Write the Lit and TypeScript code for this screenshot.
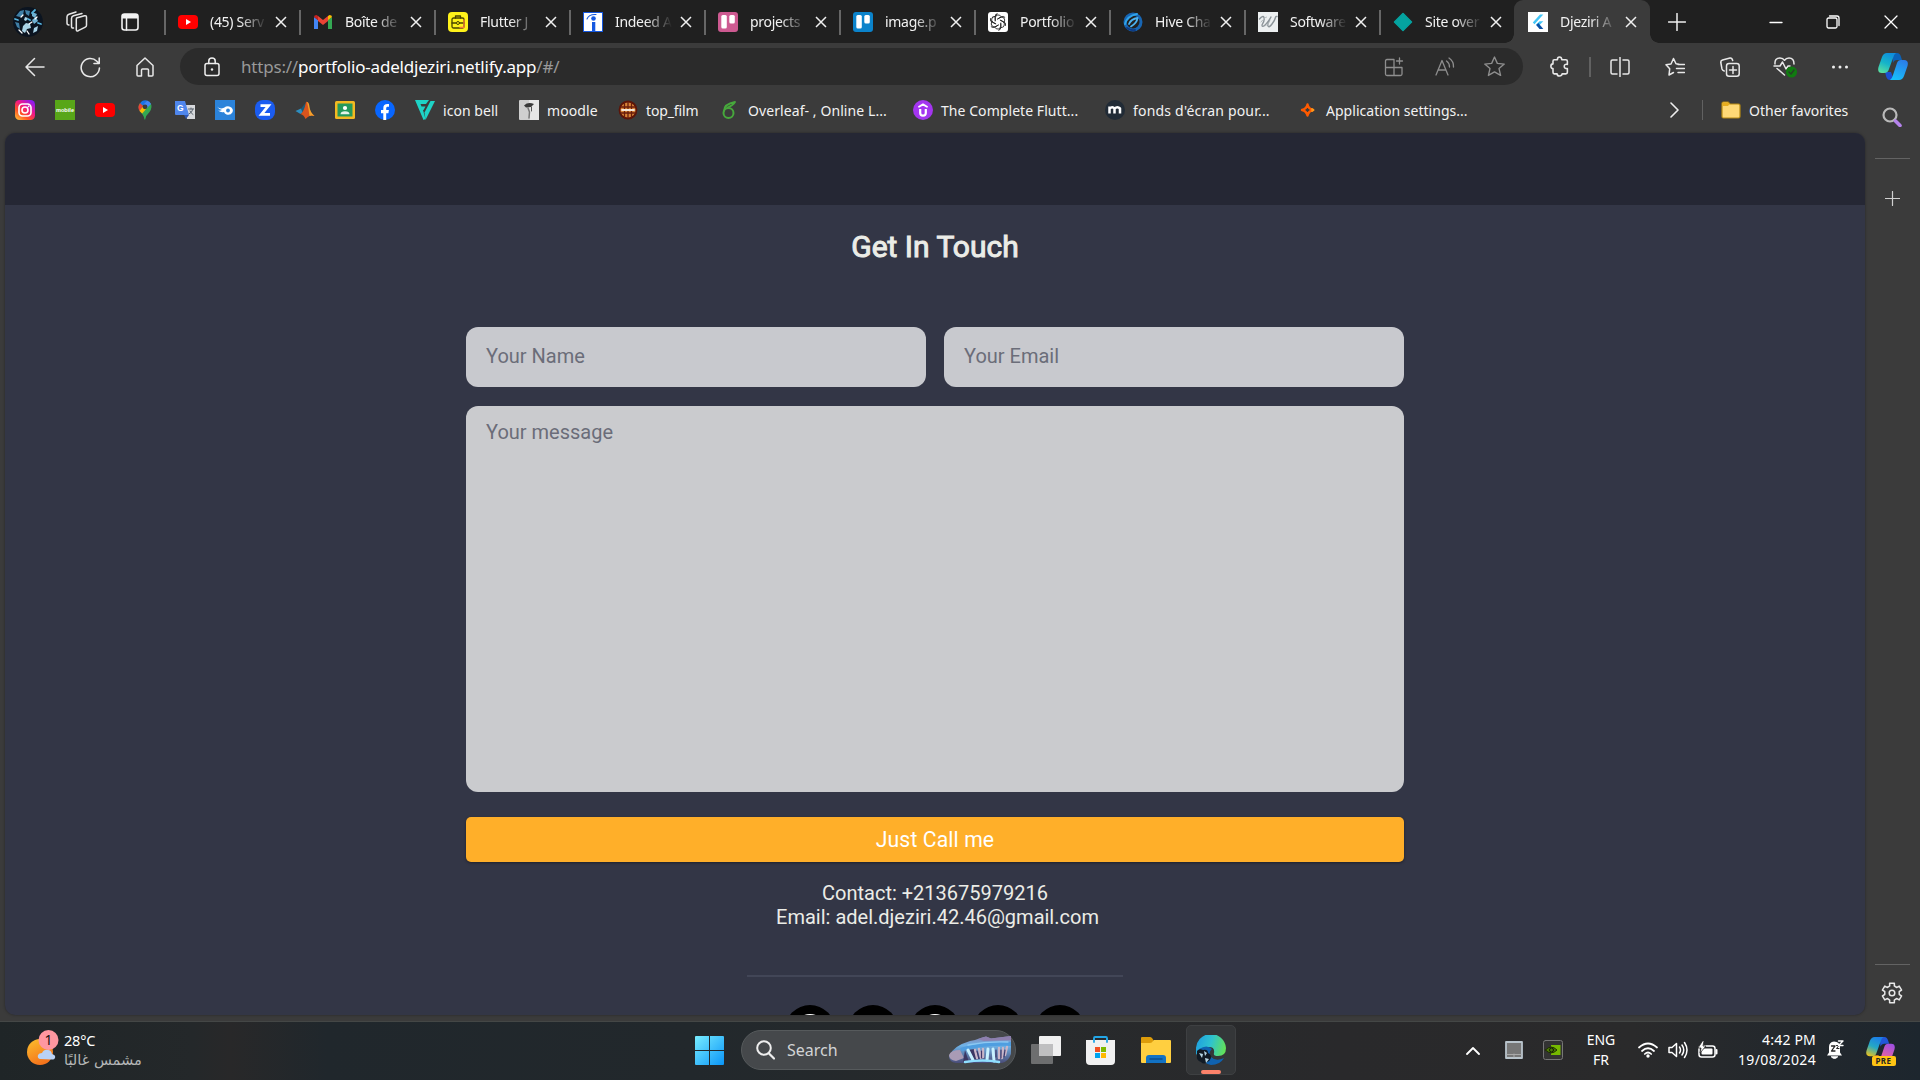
import { LitElement, html, css, svg, nothing } from "lit";
import { customElement } from "lit/decorators.js";

const icon = (w: number, h: number, vb: string, body: unknown) =>
  html`<svg width=${w} height=${h} viewBox=${vb} fill="none" stroke-linecap="round" stroke-linejoin="round">${body}</svg>`;

const line = (d: string, size = 20, color = "#e8e8e8", sw = 1.5) =>
  icon(size, size, "0 0 20 20", svg`<path d=${d} stroke=${color} stroke-width=${sw} />`);

const youtube = icon(20, 20, "0 0 20 20", svg`<rect y="3" width="20" height="14" rx="4" fill="#f00"/><path d="M8 7v6l5-3z" fill="#fff"/>`);
const gmail = icon(20, 20, "0 0 20 20", svg`<path d="M1 5v12h4V8z" fill="#4285f4"/><path d="M15 8v9h4V5z" fill="#34a853"/><path d="M1 5l4 3.2V4L3.500 3Q1 3 1 5z" fill="#c5221f"/><path d="M15 4v4.200L19 5Q19 3 16.500 3z" fill="#fbbc04"/><path d="M5 4l5 4 5-4v5l-5 4-5-4z" fill="#ea4335"/>`);
const briefcase = icon(20, 20, "0 0 20 20", svg`<rect width="20" height="20" rx="4" fill="#fff21a"/><rect x="4" y="6" width="12" height="10" rx="1.500" stroke="#4a4300" stroke-width="1.300"/><path d="M7.500 6V4h5v2M4 11h4m4 0h4" stroke="#4a4300" stroke-width="1.300"/><path d="M16 8v7.500h-4" stroke="#f5793b" stroke-width="1.300"/><circle cx="10" cy="11" r="1.500" stroke="#4a4300"/>`);
const indeed = icon(20, 20, "0 0 20 20", svg`<path d="M0 0h20v20H0z" fill="#fff" stroke="#1558e0" stroke-width="2"/><circle cx="10.500" cy="6.500" r="2.300" fill="#1558e0"/><path d="M9 10h3.300v9H9z" fill="#1558e0"/><path d="M4 7Q6 2 13 2.500" stroke="#1558e0" stroke-width="1.100"/>`);
const trello = (c: string) => icon(20, 20, "0 0 20 20", svg`<rect width="20" height="20" rx="3" fill=${c}/><rect x="3.300" y="3" width="5.500" height="13.500" rx="1.500" fill="#fff"/><rect x="11.300" y="3" width="5.500" height="8.500" rx="1.500" fill="#fff"/>`);
const gpt = icon(20, 20, "0 0 20 20", svg`<rect width="20" height="20" rx="3" fill="#fff"/>${[0, 60, 120, 180, 240, 300].map((a) => svg`<path d="M7.200 9V5.800a3.200 3.200 0 0 1 6-1.200M10 6.800l3.200-1.900a3.100 3.100 0 0 1 3.600.3" transform=${`rotate(${a} 10 10)`} stroke="#222" stroke-width=".9"/>`)}`);
const hive = icon(20, 20, "0 0 20 20", svg`<circle cx="10" cy="10" r="8" stroke="#1866b4" stroke-width="3"/><path d="M2 12Q4 4 14 2" stroke="#2fa3ea" stroke-width="2"/><path d="M6 12Q8 7 14.500 6 14 11 8 14.500" stroke="#4db4f3" stroke-width="1.800"/><path d="M4 16q4 3 8 2" stroke="#0d3b84" stroke-width="2"/>`);
const wLogo = icon(20, 20, "0 0 20 20", svg`<path d="M0 0h20v20H0z" fill="#edf0f1"/><path d="M1.500 7Q5 3 6 5.500T4 13Q4 15.500 6.500 13.500T13 5Q9 12 10 14t4-2 3.500-6.500Q17.500 4 19 4.500" stroke="#8c9499" stroke-width="1.400"/><path d="M3 10Q7 5 8.500 5M7 14Q10 13 12 9" stroke="#b3babd"/>`);
const diamond = icon(20, 20, "0 0 20 20", svg`<path d="M10 1.500L18.500 10 10 18.500 1.500 10z" fill="#05a3a0" stroke="#05a3a0" stroke-width="1.500"/>`);
const flutter = icon(20, 20, "0 0 20 20", svg`<path d="M0 0h20v20H0z" fill="#fff"/><path d="M4.800 10.500L12 2.500h3.300L6.500 12.200z" fill="#43c6f7"/><path d="M11.500 9.200h3.800L11.800 12.800 10 14.500 8 12.800z" fill="#43c6f7"/><path d="M8.200 13l2.200-1.900 4.900 5.900h-3.800z" fill="#0a4fa5"/>`);

const TABS: [string, unknown][] = [
  ["(45) Serv", youtube],
  ["Boîte de", gmail],
  ["Flutter J", briefcase],
  ["Indeed A", indeed],
  ["projects", trello("#cd5a91")],
  ["image.p", trello("#0b83cb")],
  ["Portfolio", gpt],
  ["Hive Cha", hive],
  ["Software", wLogo],
  ["Site over", diamond],
  ["Djeziri A", flutter],
];

const instagram = icon(20, 20, "0 0 20 20", svg`<defs><linearGradient id="ig" x1="0" y1="1" x2=".8" y2="0"><stop stop-color="#ffca3a"/><stop offset=".35" stop-color="#ff5324"/><stop offset=".65" stop-color="#f0168a"/><stop offset="1" stop-color="#8a1cf5"/></linearGradient></defs><rect width="20" height="20" rx="4.500" fill="url(#ig)"/><rect x="4" y="4" width="12" height="12" rx="3.500" stroke="#fff" stroke-width="1.600"/><circle cx="10" cy="10" r="3" stroke="#fff" stroke-width="1.600"/><circle cx="13.600" cy="6.400" r=".9" fill="#fff"/>`);
const mobile = icon(20, 20, "0 0 20 20", svg`<path d="M0 0h20v20H0z" fill="#58a618"/><text x="10" y="12" text-anchor="middle" textLength="18" lengthAdjust="spacingAndGlyphs" font-family="Liberation Sans" font-weight="700" font-size="5.500" fill="#fff">mobile</text>`);
const maps = icon(20, 20, "0 0 20 20", svg`<path d="M10 20Q9 15 5.500 12Q2 7 5 3L10 7z" fill="#34a853"/><path d="M10 20q1-5 4.500-8 3.500-5 1-9L7 12z" fill="#34a853"/><path d="M5 3.500A6.500 6.500 0 0 1 12 .4L8 6z" fill="#1a73e8"/><path d="M5 3.200l3.500 3L4.500 11Q2 7 5 3.200z" fill="#ea4335"/><path d="M12 .4q3 .8 4 3.500L12 8 8.500 4.500z" fill="#4285f4"/><path d="M4.500 11L8 6.500l3.500 2L7.200 13.600z" fill="#fbbc04"/><circle cx="10" cy="6.800" r="2.400" fill="#3b3b3b"/>`);
const translate = icon(20, 20, "0 0 20 20", svg`<path d="M9 5h11v14h-8z" fill="#d7d9dc"/><path d="M0 1h10l4 14H1Q0 15 0 14z" fill="#4f86ec"/><path d="M9 15h5l-3 4z" fill="#2f56b0"/><text x="2" y="11" font-family="Liberation Sans" font-weight="700" font-size="8.500" fill="#fff">G</text><path d="M13.500 9h5m-2.500-1v1m2 0q-1 4-4 5m1-3q1 2.500 3 3.500" stroke="#5c6670"/>`);
const medal = icon(20, 20, "0 0 20 20", svg`<path d="M0 0h20v20H0z" fill="#2b83da"/><path d="M2 6.500q3 3 7 1.200 3-2 6-1 4 2 2.500 5.500-2 3.500-6 2.300-2-.8-2.500-2.500-3 1-6-1.500 2 .5 4-.5-3-.5-5-3.500z" fill="#fff"/><circle cx="13" cy="10.500" r="1.900" fill="#2b83da"/>`);
const zBadge = icon(20, 20, "0 0 20 20", svg`<rect width="20" height="20" rx="8" fill="#1b5cf0"/><path d="M5.500 5.700h8L6.500 14.300h8.500" stroke="#fff" stroke-width="2.800" stroke-linecap="butt" stroke-linejoin="miter"/>`);
const matlab = icon(20, 20, "0 0 20 20", svg`<path d="M.5 11L6 8.500l3 3L5.500 14z" fill="#2d8ec0"/><path d="M6 8.500l5-6-2 9-1.500 1z" fill="#1c5a78"/><path d="M11 2q2-1 3 5t5.500 9q-3-1-5 0t-4 3Q9 15 5.500 14 9 12 11 2z" fill="#d9541e"/><path d="M12 2q2 0 2.500 5t5 9q-3-1-5 0-1-8-2.500-14z" fill="#f5a02a"/>`);
const classroom = icon(20, 20, "0 0 20 20", svg`<rect y="1" width="20" height="18" rx="1.500" fill="#f3b921"/><path d="M2.500 3.500h15v13h-15z" fill="#24995b"/><circle cx="10" cy="8" r="2.100" fill="#fff"/><path d="M5.500 14.200q0-3 4.500-3t4.500 3z" fill="#e3f4e8"/>`);
const facebook = icon(20, 20, "0 0 20 20", svg`<circle cx="10" cy="10" r="10" fill="#0866ff"/><path d="M8.300 20v-6.800H6V10h2.300V8.200c0-3 1.500-4.300 4.200-4.300l1.500.2v2.700h-1.300c-1.100 0-1.500.6-1.500 1.600V10h2.700l-.5 3.200h-2.200V20z" fill="#fff"/>`);
const iconBell = icon(20, 20, "0 0 20 20", svg`<path d="M0 0h14l-3 4H5.500l1 2.500h4L8.500 10H8l2.500 9-2 1z" fill="#1ed3c6"/><path d="M15.500 1H20L10.500 20 9.500 12.500z" fill="#1ed3c6"/>`);
const moodle = icon(20, 20, "0 0 20 20", svg`<rect width="20" height="20" rx="1" fill="#cfcfcf"/><path d="M10 0h10v20H11z" fill="#e6e6e6"/><path d="M5 5.500q4-4 10-1.500l-3 3-5 .5z" fill="#3a3a3a"/><path d="M9 8l1.500 4-.5 6" stroke="#777" stroke-width="1.500"/><path d="M12.500 7v4" stroke="#555"/>`);
const film = icon(20, 20, "0 0 20 20", svg`<circle cx="10" cy="10" r="8.500" fill="#d88337" stroke="#5b1408" stroke-width="1.800"/><path d="M3 7h14M3 13h14M6.500 3v14M10 2v16M13.500 3v14" stroke="#6a1c0c" stroke-width="1.300"/><path d="M4 10h12" stroke="#f5e6d8" stroke-width="1.800"/>`);
const overleaf = icon(20, 20, "-2 0 20 20", svg`<circle cx="6.500" cy="13" r="5" stroke="#47a83c" stroke-width="2"/><path d="M2 11Q2 4 13 2 11 5.500 5.500 7.500" stroke="#47a83c" stroke-width="1.800"/>`);
const udemy = icon(20, 20, "0 0 20 20", svg`<circle cx="10" cy="10" r="10" fill="#a435f0"/><path d="M7.200 9v4q0 2.600 2.800 2.600t2.800-2.600V9" stroke="#fff" stroke-width="2.200" stroke-linecap="butt"/><path d="M6 6.700l4-2.300 4 2.300" stroke="#fff" stroke-width="1.800"/>`);
const mBadge = icon(20, 20, "0 0 20 20", svg`<circle cx="10" cy="10" r="10" fill="#212b36"/><path d="M4.500 13.500v-7m0 2q3-2.500 5 0v5m0-5q3-2.500 5.500 0v5" stroke="#fff" stroke-width="2.500" stroke-linecap="butt"/>`);
const spark = icon(20, 20, "-2 0 20 20", svg`<path d="M7.500 4.500Q8.500 9 13 10 8.500 11 7.500 15.500 6.500 11 2 10 6.500 9 7.500 4.500z" stroke="#ff5a00" stroke-width="2.400" /><path d="M7.500 8Q8 9.500 9.500 10 8 10.500 7.500 12 7 10.500 5.500 10 7 9.500 7.500 8z" fill="#3b3b3b"/><path d="M12 9l1.500 1-1.500 1" stroke="#ff9a1a" stroke-width="2"/>`);

/* icon, label, cell width, letter spacing */
const MARKS: [unknown, string, number, number][] = [
  [instagram, "", 40, 0], [mobile, "", 40, 0], [youtube, "", 40, 0], [maps, "", 40, 0], [translate, "", 40, 0],
  [medal, "", 40, 0], [zBadge, "", 40, 0], [matlab, "", 40, 0], [classroom, "", 40, 0], [facebook, "", 40, 0],
  [iconBell, "icon bell", 104, 0.05], [moodle, "moodle", 99, 0.1], [film, "top_film", 102, -0.12],
  [overleaf, "Overleaf- , Online L...", 193, 0.08], [udemy, "The Complete Flutt...", 192, 0.06],
  [mBadge, "fonds d'écran pour...", 193, 0.2], [spark, "Application settings...", 200, 0.03],
];

const closeX = html`<svg class="x" width="12" height="12" viewBox="0 0 12 12"><path d="M1 1l10 10M11 1L1 11" stroke="#f0f0f0" stroke-width="1.500"/></svg>`;

const gearPath = (() => {
  const p: string[] = [];
  for (let i = 0; i < 6; i++) {
    const a = (i * Math.PI) / 3 - Math.PI / 2;
    const pt = (r: number, o: number) => `${(11 + r * Math.cos(a + o)).toFixed(2)} ${(11 + r * Math.sin(a + o)).toFixed(2)}`;
    p.push(`${i ? "L" : "M"}${pt(7.4, -0.32)}L${pt(10, -0.24)}L${pt(10, 0.24)}L${pt(7.4, 0.32)}L${pt(7.2, 0.52)}`);
  }
  return p.join("") + "z";
})();

const copilot = (n: string, size: number, pre = false) => icon(size, Math.round(size * 0.9), "0 0 30 27", svg`
  <defs>
    <linearGradient id=${n + "a"} x1=".6" y1="0" x2=".2" y2="1"><stop stop-color=${pre ? "#1c7fe8" : "#0f8fdc"}/><stop offset=".5" stop-color=${pre ? "#25a9c4" : "#16b4c9"}/><stop offset="1" stop-color=${pre ? "#e8c21f" : "#5be0a0"}/></linearGradient>
    <linearGradient id=${n + "b"} x1=".7" y1="0" x2=".3" y2="1"><stop stop-color=${pre ? "#a04fe0" : "#2b7de8"}/><stop offset="1" stop-color=${pre ? "#ff6a8a" : "#17c0fb"}/></linearGradient>
  </defs>
  <path d="M14 0h5q3 0 4 4l1 3h-5q-3 0-4 3z" fill=${pre ? "#2257d8" : "#0b62b8"}/>
  <path d="M16 27h-4q-3 0-4-4l-1-4h6z" fill=${pre ? "#f08c2a" : "#1b4fd0"}/>
  <path d="M9 0h9q-2 1-3 5l-4 11q-1 4-5 4H4Q-1 20 .5 14L4 4Q5.500 0 9 0z" fill=${`url(#${n}a)`}/>
  <path d="M21 27h-9q2-1 3-5l4-12q1-3 4-3h3q5 0 3.500 6L26 23q-1.500 4-5 4z" fill=${`url(#${n}b)`}/>`);

@customElement("browser-chrome")
class BrowserChrome extends LitElement {
  static styles = css`
    :host { display: block; color: #f2f2f2; font-family: "Noto Sans", "Open Sans", sans-serif; font-size: 14px; }
    svg { display: block; flex: none; }
    .strip { display: flex; height: 43px; background: #202020; }
    .lead { display: grid; grid-template-columns: 56px 42px 64px; width: 164px; align-items: center; justify-items: center; }
    .tab { box-sizing: border-box; width: 135px; height: 43px; padding: 1px 0 0 12px; display: flex; align-items: center; position: relative; }
    .tab .sep { width: 2px; height: 25px; background: #666; margin-left: -12px; margin-right: 12px; }
    .tab .name { width: 60px; margin-left: 12px; white-space: nowrap; letter-spacing: -0.3px; padding-bottom: 2px;
      -webkit-mask-image: linear-gradient(90deg, #000 30px, transparent 57px); mask-image: linear-gradient(90deg, #000 30px, transparent 57px); }
    .tab .x { margin-left: 5px; }
    .tab.on { width: 136px; background: #3b3b3b; border-radius: 9px 9px 0 0; padding-left: 14px; }
    .tab.on::before, .tab.on::after { content: ""; position: absolute; bottom: 0; width: 9px; height: 9px; }
    .tab.on::before { left: -9px; background: radial-gradient(circle at 0 0, transparent 8.5px, #3b3b3b 9px); }
    .tab.on::after { right: -9px; background: radial-gradient(circle at 100% 0, transparent 8.5px, #3b3b3b 9px); }
    .win { display: grid; grid-template-columns: 54px 101px 56px 59px; align-items: center; justify-items: center; }
    .win .min { margin-left: 43px; }
    .bar { display: flex; height: 48px; align-items: center; background: #3b3b3b; }
    .nav { display: grid; grid-template-columns: 60px 50px 60px; padding-left: 5px; width: 175px; justify-items: center; align-items: center; }
    .url { display: flex; align-items: center; width: 1343px; height: 37px; border-radius: 19px; background: #2b2b2b; box-sizing: border-box; padding-left: 23px; margin-bottom: 1px; }
    .addr { margin-left: 20px; width: 1127px; font-size: 17px; color: #999; letter-spacing: -0.2px; white-space: nowrap; padding-bottom: 1px; }
    .addr b { font-weight: 400; color: #fff; }
    .ua { display: grid; grid-template-columns: 51px 51px 49px; justify-items: center; align-items: center; }
    .acts { display: grid; grid-template-columns: 60px 2px 57px 54px 56px 54px 56px 50px; justify-items: center; align-items: center; padding: 0 0 1px 6px; }
    .vr { width: 2px; height: 20px; background: #616161; }
    .marks { display: flex; box-sizing: border-box; align-items: center; height: 42px; background: #3b3b3b; padding: 0 0 4px 15px; }
    .mk { display: flex; align-items: center; gap: 8px; white-space: nowrap; flex: none; }
    .tail { display: flex; align-items: center; margin-left: 167px; padding-left: 4px; white-space: nowrap; flex: none; }
    .tail .vr { margin: 0 18px 0 23px; width: 1px; }
    .tail span { margin-left: 8px; letter-spacing: 0; }
  `;

  render() {
    return html`
      <div class="strip">
        <div class="lead">
          ${icon(30, 30, "0 0 30 30", svg`<defs><clipPath id="av"><circle cx="15" cy="15" r="15"/></clipPath></defs><g clip-path="url(#av)"><path d="M0 0h30v30H0z" fill="#0b1420"/><path d="M3 9l4-5 4-1-1 5-3 2zM12 3l5 1-1 5-3-2zM2 15l4 1 1 6-3-2z" fill="#3f7fa6"/><path d="M19 5l5 2-2 4-3-2zM19 13l4-3 2 4-4 3z" fill="#6fb1d2"/><path d="M10 19l3-3 4 1 1 4-4 1-2 4-3-2zM21 21l4-2-1 5-4 2zM12 10l3 1-2 3-2-1z" fill="#a9d3e6"/><path d="M8 10l2-2M16 17l3-2M14 24l2 3M22 12l2-2M6 23l3 3" stroke="#fff" stroke-width="1.300"/><path d="M19 6l3-3M25 16l3 1M2 12l3 1M15 12l2 1" stroke="#56b3dd" stroke-width="1.800"/></g>`)}
          ${icon(22, 22, "0 0 22 22", svg`<path d="M10.500 7l8-2.300q2-.4 2 1.500v8q0 1.300-1.200 1.900l-7 3.600q-2 .8-2-1.200V9q0-1.500.2-2zM7.500 17q-2 .3-2-1.500V7.500q0-2 2-2.700L16 2.500M3 14Q1 14 1 12V5.800Q1 4 3 3.300L10 1" stroke="#e6e6e6" stroke-width="1.500"/>`)}
          ${icon(18, 18, "0 0 18 18", svg`<rect x="1" y="1" width="16" height="16" rx="2.500" stroke="#f2f2f2" stroke-width="1.600"/><path d="M1 3q0-2 2-2h12q2 0 2 2v2.500H1z" fill="#f2f2f2"/><path d="M5.500 5v12" stroke="#f2f2f2" stroke-width="1.500"/>`)}
        </div>
        ${TABS.map(([name, ic], i) => html`<div class="tab ${i === 10 ? "on" : ""}">${i < 10 ? html`<i class="sep"></i>` : nothing}${ic}<span class="name">${name}</span>${closeX}</div>`)}
        <div class="win">
          ${icon(18, 18, "0 0 18 18", svg`<path d="M9 .5v17M.5 9h17" stroke="#eee" stroke-width="1.500"/>`)}
          <span class="min">${icon(14, 14, "0 0 14 14", svg`<path d="M1 7.500h12" stroke="#fff" stroke-width="1.300"/>`)}</span>
          ${icon(14, 14, "0 0 14 14", svg`<rect x="1" y="3" width="10" height="10" rx="1.500" stroke="#fff" stroke-width="1.300"/><path d="M3.500 1H11q2 0 2 2v7.500" stroke="#fff" stroke-width="1.300"/>`)}
          ${icon(14, 14, "0 0 14 14", svg`<path d="M1 1l12 12M13 1L1 13" stroke="#fff" stroke-width="1.300"/>`)}
        </div>
      </div>
      <div class="bar">
        <div class="nav">
          ${line("M19 10H1M9.500 1.500L1 10l8.500 8.500", 20)}
          ${line("M18.500 10.500A8.700 8.700 0 1 1 16 4l2 2M18.300 1v5.200h-5", 21)}
          ${line("M2 8.500L10 1l8 7.500V18q0 1-1 1h-3.500v-6q0-1-1-1h-5q-1 0-1 1v6H3q-1 0-1-1z", 20)}
        </div>
        <div class="url">
          ${icon(18, 20, "0 0 18 20", svg`<rect x="2" y="6.500" width="14" height="12" rx="2" stroke="#eee" stroke-width="1.500"/><path d="M5.800 6.500V4q0-3 3.200-3t3.200 3v2.500" stroke="#eee" stroke-width="1.500"/><circle cx="9" cy="12.500" r="1.200" fill="#eee"/>`)}
          <div class="addr">https://<b>portfolio-adeldjeziri.netlify.app</b>/#/</div>
          <div class="ua">
            ${line("M10 2.500H3q-1.500 0-1.500 1.500v13q0 1.500 1.500 1.500h13.500q1.500 0 1.500-1.500v-6.500H1.500M10 2.500v16M15.500 1v6M12.500 4h6", 20, "#8e8e8e", 1.3)}
            ${line("M1 18L7 3.500 13 18M3 13h8M11.500 4q3 2 3 6M14 1q5 3.500 4.500 9", 20, "#8e8e8e", 1.3)}
            ${line("M10 1l2.700 6 6.600.7-5 4.300 1.500 6.500L10 15.200 4.200 18.500 5.700 12 .7 7.700 7.300 7z", 21, "#8e8e8e", 1.3)}
          </div>
        </div>
        <div class="acts">
          ${line("M5 3.500h3Q8 1 10 1t2.200 2.500H16q1.500 0 1.500 1.500v3q-3-.5-3 1.800t3 2.200v3.500q0 1.500-1.500 1.500h-3.500Q12.200 19 10 19t-2.300-2H5q-1.200 0-1.200-1.500V12Q1.800 12 1.800 9.800T3.800 7.500V5q0-1.500 1.200-1.500z", 21)}
          <i class="vr"></i>
          ${line("M10 .5v19M7 3H2.500Q1 3 1 4.500v11Q1 17 2.500 17H7M13 3h4.500Q19 3 19 4.500v11q0 1.500-1.500 1.500H13", 20)}
          ${line("M14 7.200l-3-.4L8.500 1.500 6 7l-5 .8 3.700 4L4 18l4.500-2.500M13 7.500h6.500M11.500 11.500h8M13 15.500h6.500", 20)}
          ${icon(20, 20, "0 0 20 20", svg`<rect x="6.500" y="6.500" width="12.700" height="12.700" rx="2.500" stroke="#e8e8e8" stroke-width="1.500"/><path d="M13 9.500v7M9.500 13h7M4.200 14Q2.500 13.500 2 12L.8 5.500Q.6 3.500 2.500 3L10 1q2-.3 2.700 2.500" stroke="#e8e8e8" stroke-width="1.500"/>`)}
          ${icon(24, 22, "0 0 24 22", svg`<path d="M2 8Q1.500 2 7 2q3 0 4.500 2.300Q13 2 16 2q5 0 5 6M1 10h6l2.500-4L13 13l2-3h2M4 12.500L11.500 19" stroke="#e8e8e8" stroke-width="1.500"/><circle cx="18.500" cy="16" r="5.500" fill="#107c10"/><path d="M16 16l2 2 3-4" stroke="#263f26" stroke-width="1.400"/>`)}
          ${icon(18, 6, "0 0 18 6", svg`<g fill="#eee"><circle cx="2.500" cy="3" r="1.500"/><circle cx="9" cy="3" r="1.500"/><circle cx="15.500" cy="3" r="1.500"/></g>`)}
          ${copilot("top", 30)}
        </div>
      </div>
      <div class="marks">
        ${MARKS.map(([ic, t, w, ls]) => html`<div class="mk" style="width:${w}px;letter-spacing:${ls}px">${ic}${t ? html`<span>${t}</span>` : nothing}</div>`)}
        <div class="tail">
          ${icon(10, 16, "0 0 10 16", svg`<path d="M2 1l7 7-7 7" stroke="#eee" stroke-width="1.600"/>`)}
          <i class="vr"></i>
          ${icon(20, 18, "0 0 20 18", svg`<path d="M1 2.500Q1 1 2.500 1H7l2 2h8.500Q19 3 19 4.500v11q0 1.500-1.500 1.500h-15Q1 17 1 15.500z" fill="#ffd976" stroke="#b78a12" stroke-width="1.200"/><path d="M1.500 5V2q0-.6 1-.6h4.300L8.500 3 7 5z" fill="#e8ad1e"/>`)}
          <span>Other favorites</span>
        </div>
      </div>`;
  }
}

@customElement("contact-page")
class ContactPage extends LitElement {
  static styles = css`
    :host { display: block; height: 882px; width: 1860px; border-radius: 10px; overflow: hidden; background: #333646; font-family: Roboto, sans-serif; color: #ebece7; box-shadow: 0 0 3px rgba(0,0,0,.35); }
    .head { height: 72px; background: #252734; }
    h1 { margin: 0; padding-top: 24px; height: 36px; line-height: 36px; font-size: 30px; font-weight: 400; -webkit-text-stroke: 1px #ebece7; color: #ebece7; text-align: center; }
    .form { width: 938px; margin: 62px auto 0; }
    .row { display: grid; grid-template-columns: 1fr 1fr; gap: 18px; }
    .field { box-sizing: border-box; height: 60px; border-radius: 12px; background: #c8c9ce; padding: 0 20px; line-height: 58px; font-size: 20px; color: #6b6d79; }
    .area { height: 386px; margin-top: 19px; line-height: 24px; padding-top: 14px; background: #cacbce; }
    .call { height: 45px; line-height: 46px; margin-top: 25px; border-radius: 5px; background: #ffaf29; color: #fff; text-align: center; font-size: 21.2px; letter-spacing: .1px; box-shadow: 0 1px 3px rgba(0,0,0,.4); }
    .info { margin-top: 19px; text-align: center; font-size: 20px; line-height: 24px; }
    .info p { margin: 0; }
    .mail { padding-left: 5px; }
    hr { width: 376px; margin: 46px auto 0; border: 0; height: 2px; background: #424657; }
    .social { display: flex; justify-content: center; gap: 12.500px; margin-top: 28px; }
    .dot { width: 50px; height: 50px; border-radius: 50%; background: #000; display: flex; justify-content: center; }
    .dot.ring::before { content: ""; width: 32px; height: 32px; box-sizing: border-box; border: 3px solid #fff; border-radius: 50%; margin-top: 9px; }
  `;

  render() {
    return html`
      <div class="head"></div>
      <h1>Get In Touch</h1>
      <div class="form">
        <div class="row"><div class="field">Your Name</div><div class="field">Your Email</div></div>
        <div class="field area">Your message</div>
        <div class="call">Just Call me</div>
      </div>
      <div class="info"><p>Contact: +213675979216</p><p class="mail">Email: adel.djeziri.42.46@gmail.com</p></div>
      <hr />
      <div class="social">${[1, 0, 1, 0, 0].map((r) => html`<div class="dot ${r ? "ring" : ""}"></div>`)}</div>`;
  }
}

@customElement("task-bar")
class TaskBar extends LitElement {
  static styles = css`
    :host { box-sizing: border-box; display: grid; grid-template-columns: 695px 541px 1fr; grid-template-rows: 56px; height: 60px; border-top: 1px solid #444746; background: linear-gradient(90deg, #1f2527 0, #24282a 10%, #282829 12%, #20272c 17%, #22282c 36%, #272a2c 50%, #29292b 70%, #2a2a2b 85%, #1d262e 100%); color: #fff; font-family: "Noto Sans", "Open Sans", sans-serif; font-size: 14px; }
    svg { display: block; flex: none; }
    .weather { display: flex; align-items: center; padding-left: 27px; gap: 5px; line-height: 20px; }
    .weather svg { margin-bottom: 5px; }
    .weather p, .lang p, .clock p { margin: 0; white-space: nowrap; }
    .weather .ar { color: #b4b6b6; font-family: "DejaVu Sans", sans-serif; font-size: 14.6px; }
    .deg { letter-spacing: -.2px; font-size: 14.500px; }
    .mid { display: grid; grid-template-columns: 46px 290px 55px 55px 45px 50px; align-items: center; }
    .search { box-sizing: border-box; width: 275px; height: 40px; border-radius: 20px; background: #45484b; border: 1px solid #565a5c; display: flex; align-items: center; padding: 0 3px 0 14px; }
    .search span { flex: 1; margin-left: 12px; font-size: 16px; color: #d2d4d5; }
    .tile { box-sizing: border-box; width: 50px; height: 50px; border-radius: 5px; background: #343638; border: 1px solid #3e4042; display: flex; flex-direction: column; align-items: center; justify-content: space-between; padding: 9px 0 0; }
    .ind { width: 20px; height: 4px; border-radius: 2px; background: #fc826a; }
    .tray { display: grid; grid-template-columns: 34px 47px 32px 64px 30px 30px 30px 93px 38px 52px; padding-left: 220px; align-items: center; justify-items: center; line-height: 20px; }
    .lang { text-align: center; }
    .clock { text-align: right; justify-self: end; }
    .date { letter-spacing: .35px; }
    .time { letter-spacing: .2px; }
    .pre { position: relative; }
    .pre b { position: absolute; left: 6px; top: 19px; width: 24px; height: 10px; border-radius: 2px; background: #ffc414; color: #222; font-size: 8px; line-height: 10px; text-align: center; font-weight: 700; letter-spacing: .5px; }
  `;

  render() {
    return html`
      <div class="weather">
        ${icon(32, 36, "0 0 32 36", svg`<defs><linearGradient id="sun" x1="0" y1="0" x2=".5" y2="1"><stop stop-color="#fbc02d"/><stop offset="1" stop-color="#f4731c"/></linearGradient></defs><circle cx="13" cy="22" r="13" fill="url(#sun)"/><path d="M13 29q-3-1-2-4 1-2 4-2 2-4 6-3 3 0 4 4 4 1 3 4-1 2-3 1.500z" fill="#b9d2f5"/><circle cx="21.500" cy="10" r="10" fill="#ff97a0"/><text x="21.500" y="15" text-anchor="middle" font-family="Noto Sans" font-size="14" fill="#111">1</text>`)}
        <div><p class="deg">28°C</p><p class="ar" dir="rtl">مشمس غالبًا</p></div>
      </div>
      <div class="mid">
        ${icon(29, 29, "0 0 29 29", svg`<defs><linearGradient id="wn" gradientUnits="userSpaceOnUse" x1="0" y1="0" x2="29" y2="29"><stop stop-color="#78ecff"/><stop offset="1" stop-color="#0a95f8"/></linearGradient></defs><path d="M1 0h13v14H0V1q0-1 1-1zM15 0h13q1 0 1 1v13H15zM0 15h14v14H1q-1 0-1-1zM15 15h14v13q0 1-1 1H15z" fill="url(#wn)"/>`)}
        <div class="search">
          ${icon(19, 20, "0 0 19 20", svg`<circle cx="8" cy="8" r="6.800" stroke="#eee" stroke-width="2"/><path d="M13 13.500l5 5" stroke="#eee" stroke-width="2.200"/>`)}
          <span>Search</span>
          ${icon(64, 28, "0 0 64 28", svg`<defs><linearGradient id="wf" x1="0" y1="0" x2="0" y2="1"><stop stop-color="#8782b0"/><stop offset=".35" stop-color="#6fb4e8"/><stop offset="1" stop-color="#4a4c78"/></linearGradient></defs>
            <path d="M1 20Q5 10 22 5q6-1 12-3.500l4-1 5 2L63 0v18q-3 8-9 9H8Q1 26 1 20z" fill="url(#wf)"/>
            <path d="M30 3l8-2.500 5 2L63 0v4L36 5z" fill="#8d7fae"/>
            <path d="M12 12Q32 5 63 6v4Q36 9 14 15z" fill="#4f9ee0"/><path d="M20 9q20-4 40-3" stroke="#8cc9f2" stroke-width="1.300"/>
            <path d="M1 19q2-5 11-5l4 8-8 3q-7-1-7-6z" fill="#a99bb5"/>
            <path d="M17 14l3 9q1 4-5 3M27 13l3 11-6 1-5-11z" fill="#3b3763"/>
            <path d="M20 14l5 10M40 13l-1 11M45 13l1 12" stroke="#c8f1ff" stroke-width="3"/>
            <path d="M27 14l2 8M31 13l2 9M35 13v8M51 12v10M55 12l-1 10M59 11l-2 8" stroke="#c9b6c8" stroke-width="2.400"/>
            <path d="M29 15l2 8M33.500 15v7M53 14v8M57 14l-1 7M48 14v7" stroke="#40396a" stroke-width="1.200"/>
            <path d="M17 26q18-3 34 0" stroke="#8fe0ff" stroke-width="2.500"/>`)}
        </div>
        ${icon(30, 28, "0 0 30 28", svg`<rect x="8" width="22" height="20" rx="1" fill="#f0f0f0"/><rect y="8" width="22" height="20" rx="1" fill="#6d6e6f"/><path d="M8 8h14v12H8z" fill="#bfbfc0"/>`)}
        ${icon(29, 29, "0 0 29 29", svg`<path d="M8 6V2q0-1 1-1h11q1 0 1 1v4" stroke="#23a6e6" stroke-width="1.800"/><path d="M0 4h29v21q0 4-4 4H4q-4 0-4-4z" fill="#f1f1f1"/><path d="M8 6V3M21 6V3" stroke="#23a6e6" stroke-width="1.800"/><path d="M9 11h5v5H9z" fill="#f25022"/><path d="M15 11h5v5h-5z" fill="#7fba00"/><path d="M9 17h5v5H9z" fill="#00a4ef"/><path d="M15 17h5v5h-5z" fill="#ffb900"/>`)}
        ${icon(30, 26, "0 0 30 26", svg`<path d="M0 1q0-1 1-1h8q1 0 2 1l2 3v5H0z" fill="#dd9c0a"/><path d="M0 6h9q2 0 3-2l1-1h16q1 0 1 1v21q0 1-1 1H1q-1 0-1-1z" fill="#ffcf40"/><path d="M5 26v-5q0-3 3-3h14q3 0 3 3v5z" fill="#1272c4"/><path d="M9 22h12" stroke="#0a4d8f" stroke-width="1.500"/>`)}
        <div class="tile">
          ${icon(30, 30, "0 0 30 30", svg`<defs><linearGradient id="eg" x1="0" y1=".3" x2="1" y2=".5"><stop stop-color="#1e9fe0"/><stop offset=".5" stop-color="#2fc3ce"/><stop offset="1" stop-color="#62e05a"/></linearGradient></defs><path d="M0 15A15 15 0 0 1 30 13q0 8-8 8-5 0-4-3 1-6-5-6-8 0-13 8z" fill="url(#eg)"/><path d="M3 14q8-5 13 0-4 3-1 8 5 5 13 1-4 7-13 7-11-2-12-16z" fill="#0f62b0"/><path d="M1 16q2-3 6-1 5-1 5 3 4 2 3 5-1 3-4 4-3 3-6 0-5-2-4-6z" fill="#111a24"/><path d="M3 18l4 1-1 4zM8 16l3 2-2 3zM9 23l4 1-3 4zM3 24l3 3" fill="#b5d4e2"/>`)}
          <i class="ind"></i>
        </div>
      </div>
      <div class="tray">
        ${icon(14, 9, "0 0 14 9", svg`<path d="M1 8l6-6 6 6" stroke="#fff" stroke-width="1.800"/>`)}
        ${icon(18, 18, "0 0 18 18", svg`<path d="M1 1h16v16H1z" fill="#777" stroke="#b9c4cc" stroke-width="1.800"/><path d="M2 13.500h14" stroke="#aaa"/><path d="M9 13v3" stroke="#aaa"/>`)}
        ${icon(20, 20, "0 0 20 20", svg`<rect x=".5" y=".5" width="19" height="19" rx="2" fill="#333" stroke="#777"/><path d="M8 5h9.500v10H8z" fill="#76b900"/><path d="M2.500 10Q8 4 14 10 8 16 2.500 10z" fill="#4d7a08" stroke="#1f3000"/><circle cx="8.500" cy="10" r="2" stroke="#132000"/>`)}
        <div class="lang"><p>ENG</p><p>FR</p></div>
        ${icon(20, 16, "0 0 20 16", svg`<path d="M1 5.500Q10-2.500 19 5.500M4 9Q10 3.500 16 9M6.800 12Q10 9 13.200 12" stroke="#fff" stroke-width="1.700"/><circle cx="10" cy="14" r="1.700" fill="#fff"/>`)}
        ${icon(20, 18, "0 0 20 18", svg`<path d="M1 6.500v5h3l4.500 4V2.500L4 6.500zM11.500 6q2 3 0 6M14 4q3.500 5 0 10M16.500 1.500q5 7.500 0 15" stroke="#fff" stroke-width="1.500"/>`)}
        ${icon(20, 18, "0 -2 20 18", svg`<rect x="1" y="3" width="16" height="11" rx="2.500" stroke="#fff" stroke-width="1.500"/><rect x="3.500" y="5.500" width="11" height="6" rx="1" fill="#fff"/><path d="M18.500 7v3.500" stroke="#fff" stroke-width="2"/><path d="M4.500-2L0 5h3L2 10l6-7H5l1-5z" fill="#fff" stroke="#29292a" stroke-width=".8"/>`)}
        <div class="clock"><p class="time">4:42 PM</p><p class="date">19/08/2024</p></div>
        ${icon(18, 20, "0 0 18 20", svg`<path d="M1 15.500l2-3V7q0-5 5-5.500 6 0 6 6v5l2 3z" fill="#fff"/><path d="M5.500 17q3 3 6 0z" fill="#fff" stroke="#fff"/><path d="M5.500 6h3.500l-3.500 5H9" stroke="#222" stroke-width="1.300"/><path d="M10.500 5.500H13l-2.500 3H13" stroke="#222"/><path d="M12.500 1H17l-4.500 4.500H17" stroke="#fff" stroke-width="1.400"/>`)}
        <div class="pre">${copilot("pre", 29, true)}<b>PRE</b></div>
      </div>`;
  }
}

@customElement("app-root")
class AppRoot extends LitElement {
  static styles = css`
    :host { display: block; width: 1920px; height: 1080px; overflow: hidden; background: #3b3b3b; }
    .body { display: grid; grid-template-columns: 1860px 55px; padding-left: 5px; height: 888px; }
    .side { display: flex; flex-direction: column; align-items: center; margin-top: -26px; }
    .side svg { display: block; }
    .rule { width: 35px; height: 1px; background: #636363; }
    .lens { margin: 0 1px 31px 0; }
    .plus { margin: 32px 0 auto; }
    .gear { margin: 17px 1px 17px 0; }
  `;

  render() {
    return html`
      <browser-chrome></browser-chrome>
      <div class="body">
        <contact-page></contact-page>
        <div class="side">
          <div class="lens">${icon(20, 20, "0 0 20 20", svg`<circle cx="8" cy="8" r="6.500" stroke="#b9b9b9" stroke-width="2.200"/><path d="M13.500 14l4.500 4.500" stroke="#b583ec" stroke-width="3.600"/>`)}</div>
          <i class="rule"></i>
          <div class="plus">${icon(15, 15, "0 0 15 15", svg`<path d="M7.500 .5v14M.5 7.500h14" stroke="#d0d0d0" stroke-width="1.200"/>`)}</div>
          <i class="rule"></i>
          <div class="gear">${icon(22, 22, "0 0 22 22", svg`<path d=${gearPath} stroke="#e8e8e8" stroke-width="1.500"/><circle cx="11" cy="11" r="2.800" stroke="#e8e8e8" stroke-width="1.500"/>`)}</div>
        </div>
      </div>
      <task-bar></task-bar>`;
  }
}
